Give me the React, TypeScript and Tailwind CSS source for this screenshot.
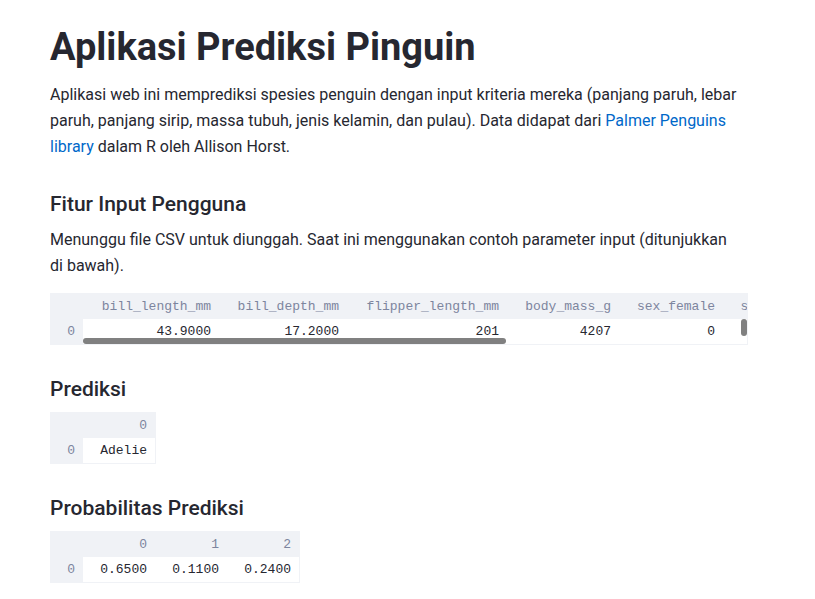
import type { ReactNode } from "react";

type Column = { name: string; value: string; width: string };

const inputColumns: Column[] = [
  { name: "bill_length_mm", value: "43.9000", width: "w-[136px]" },
  { name: "bill_depth_mm", value: "17.2000", width: "w-32" },
  { name: "flipper_length_mm", value: "201", width: "w-40" },
  { name: "body_mass_g", value: "4207", width: "w-28" },
  { name: "sex_female", value: "0", width: "w-[104px]" },
  { name: "sex_male", value: "1", width: "w-[88px]" },
];

const predictionColumns: Column[] = [{ name: "0", value: "Adelie", width: "w-[72px]" }];

const probabilityColumns: Column[] = [
  { name: "0", value: "0.6500", width: "w-[72px]" },
  { name: "1", value: "0.1100", width: "w-[72px]" },
  { name: "2", value: "0.2400", width: "w-[72px]" },
];

function DataFrame({ label, columns, children }: { label: string; columns: Column[]; children?: ReactNode }) {
  return (
    <div className="relative w-fit max-w-full overflow-hidden border border-[#f0f2f6]">
      <table
        aria-label={label}
        className="w-max table-fixed border-collapse text-right font-['Liberation_Mono',monospace] text-[13px] leading-[25px]"
      >
        <thead>
          <tr className="bg-[#f0f2f6] text-[#7d859e]">
            <th className="w-8 p-0" />
            {columns.map((c) => (
              <th key={c.name} scope="col" className={`${c.width} p-0 pr-2 font-normal`}>
                {c.name}
              </th>
            ))}
          </tr>
        </thead>
        <tbody>
          <tr className="text-[#262730]">
            <th scope="row" className="bg-[#f0f2f6] p-0 pr-2 font-normal text-[#7d859e]">
              0
            </th>
            {columns.map((c) => (
              <td key={c.name} className="p-0 pr-2">
                {c.value}
              </td>
            ))}
          </tr>
        </tbody>
      </table>
      {children}
    </div>
  );
}

function Section({ title, children }: { title: string; children: ReactNode }) {
  return (
    <section className="mt-[31px]">
      <h3 className="mb-[10px] text-[21px] leading-[26px] font-medium">{title}</h3>
      {children}
    </section>
  );
}

export default function App() {
  return (
    <main className="bg-white pt-6 pr-[67px] pb-4 pl-[50px] font-['Roboto',sans-serif] text-base leading-[26px] text-[#262730]">
      <h1 className="mb-3 text-[38px] leading-[46px] font-bold">Aplikasi Prediksi Pinguin</h1>
      <p>
        Aplikasi web ini memprediksi spesies penguin dengan input kriteria mereka (panjang paruh, lebar paruh, panjang
        sirip, massa tubuh, jenis kelamin, dan pulau). Data didapat dari{" "}
        <a href="https://github.com/allisonhorst/palmerpenguins" className="text-[#0068c9]">
          Palmer Penguins library
        </a>{" "}
        dalam R oleh Allison Horst.
      </p>

      <Section title="Fitur Input Pengguna">
        <p className="mb-[14px]">
          Menunggu file CSV untuk diunggah. Saat ini menggunakan contoh parameter input (ditunjukkan di{"\u00a0"}bawah).
        </p>
        <DataFrame label="Fitur Input Pengguna" columns={inputColumns}>
          <div className="absolute right-0 bottom-0 left-8 h-[6px]">
            <div className="h-full w-7/11 rounded-full bg-[#808080]" />
          </div>
          <div className="absolute top-[25px] right-0 h-[17px] w-[6px] rounded-full bg-[#808080]" />
        </DataFrame>
      </Section>

      <Section title="Prediksi">
        <DataFrame label="Prediksi" columns={predictionColumns} />
      </Section>

      <Section title="Probabilitas Prediksi">
        <DataFrame label="Probabilitas Prediksi" columns={probabilityColumns} />
      </Section>
    </main>
  );
}
